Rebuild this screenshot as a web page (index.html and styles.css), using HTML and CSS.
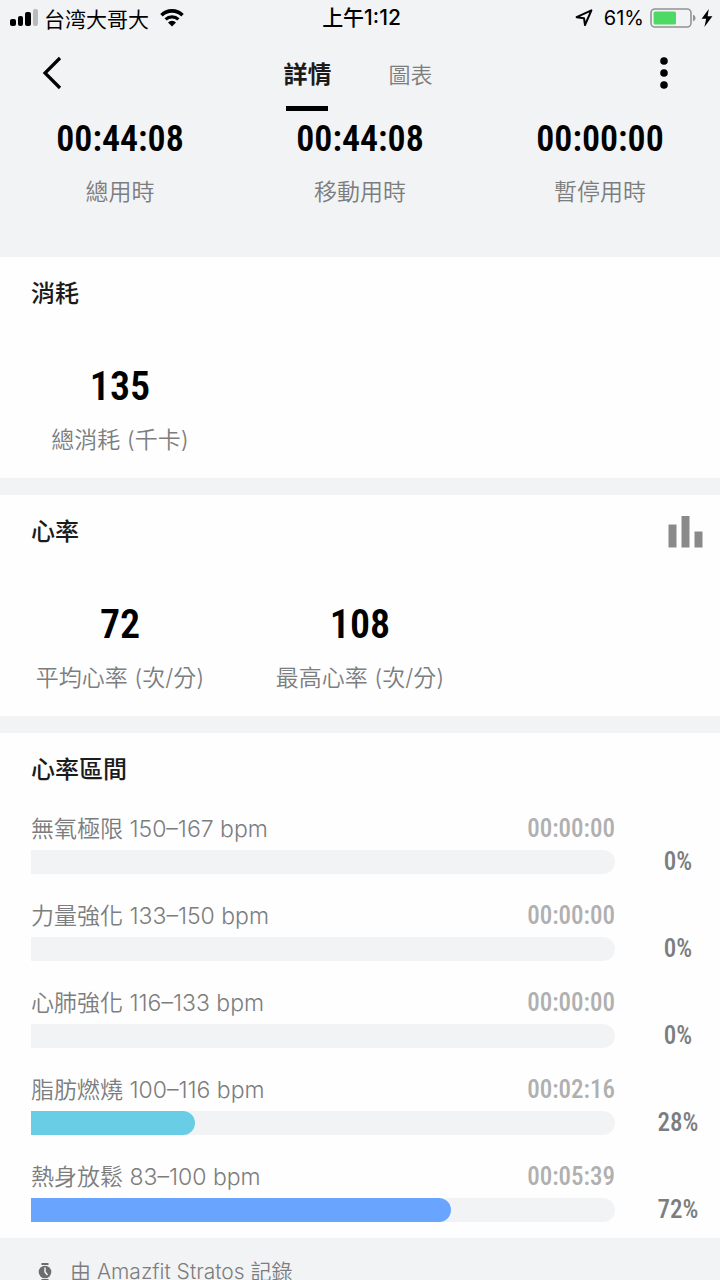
FILE: index.html
```html
<!DOCTYPE html>
<html lang="zh-Hant">
<head>
  <meta charset="UTF-8">
  <meta name="viewport" content="width=device-width, initial-scale=1.0">
  <title>運動詳情</title>
  <link rel="stylesheet" href="styles.css">
</head>
<body>
  <div class="app">
    <div class="status-bar">
      <div class="status-left">
        <svg class="signal" width="28" height="18" viewBox="0 0 28 18">
          <rect x="0" y="10" width="6" height="7" rx="2"/>
          <rect x="8" y="7" width="5" height="10" rx="2"/>
          <rect x="15" y="3" width="6" height="14" rx="2"/>
          <rect x="23" y="0" width="5" height="17" rx="2" fill="#b9babc"/>
        </svg>
        <span class="carrier" lang="zh-Hans">台湾大哥大</span>
        <svg class="wifi" width="24" height="18" viewBox="0 0 24 18">
          <path d="M1.5 6.2a15 15 0 0 1 21 0" fill="none" stroke="#000" stroke-width="3.6"/>
          <path d="M5.6 10.4a9.2 9.2 0 0 1 12.8 0" fill="none" stroke="#000" stroke-width="3.2"/>
          <path d="M12 17.4l-4-4a5.6 5.6 0 0 1 8 0z"/>
        </svg>
      </div>
      <span class="clock">上午1:12</span>
      <div class="status-right">
        <svg class="location" width="18" height="18" viewBox="0 0 18 18">
          <path d="M1.6 8.2L16.4 1.4L10 16L9 9.2z" fill="none" stroke="#000" stroke-width="2" stroke-linejoin="round"/>
        </svg>
        <span class="battery-level">61%</span>
        <svg class="battery" width="46" height="20" viewBox="0 0 46 20">
          <rect x="1" y="1" width="40" height="18" rx="4" fill="none" stroke="#929395" stroke-width="1.6"/>
          <rect x="3.6" y="3.6" width="22.4" height="12.8" rx="1.5" fill="#4cd964"/>
          <path d="M43 6.5q2.6 1 2.6 3.5t-2.6 3.5z" fill="#929395"/>
        </svg>
        <svg class="bolt" width="12" height="18" viewBox="0 0 12 18">
          <path d="M7.8 0L.6 9.8h4.6L3.4 18l8-10.8H6.6z"/>
        </svg>
      </div>
    </div>

    <header class="navbar">
      <button class="icon-btn" aria-label="返回">
        <svg width="44" height="44" viewBox="0 0 44 44">
          <path d="M30 7L15 22L30 37" fill="none" stroke="#000" stroke-width="3.2"/>
        </svg>
      </button>
      <nav class="tabs">
        <a href="#detail" class="tab active">詳情</a>
        <a href="#chart" class="tab">圖表</a>
      </nav>
      <button class="icon-btn" aria-label="更多">
        <svg width="44" height="44" viewBox="0 0 44 44">
          <circle cx="22" cy="10" r="3.8"/>
          <circle cx="22" cy="22" r="3.8"/>
          <circle cx="22" cy="34" r="3.8"/>
        </svg>
      </button>
    </header>

    <main class="content" id="detail">
      <section class="summary stats-grid">
        <div class="stat">
          <p class="value">00:44:08</p>
          <p class="label">總用時</p>
        </div>
        <div class="stat">
          <p class="value">00:44:08</p>
          <p class="label">移動用時</p>
        </div>
        <div class="stat">
          <p class="value">00:00:00</p>
          <p class="label">暫停用時</p>
        </div>
      </section>

      <section class="card">
        <div class="card-header">
          <h2>消耗</h2>
        </div>
        <div class="stats-grid">
          <div class="stat">
            <p class="value large">135</p>
            <p class="label">總消耗 (千卡)</p>
          </div>
        </div>
      </section>

      <section class="card">
        <div class="card-header">
          <h2>心率</h2>
          <button class="chart-btn" aria-label="心率圖表">
            <svg width="36" height="32" viewBox="0 0 36 32">
              <path d="M.5 8.5h8v23h-8zM13.5 0h8v31.5h-8zM26.5 15.500h8v16h-8z" fill="#8a8a8a"/>
            </svg>
          </button>
        </div>
        <div class="stats-grid">
          <div class="stat">
            <p class="value large">72</p>
            <p class="label">平均心率 (次/分)</p>
          </div>
          <div class="stat">
            <p class="value large">108</p>
            <p class="label">最高心率 (次/分)</p>
          </div>
        </div>
      </section>

      <section class="card zones">
        <div class="card-header">
          <h2>心率區間</h2>
        </div>
        <div class="zone">
          <div class="zone-info"><span>無氧極限 150–167 bpm</span><span class="zone-time">00:00:00</span></div>
          <div class="bar"></div>
          <span class="percent">0%</span>
        </div>
        <div class="zone">
          <div class="zone-info"><span>力量強化 133–150 bpm</span><span class="zone-time">00:00:00</span></div>
          <div class="bar"></div>
          <span class="percent">0%</span>
        </div>
        <div class="zone">
          <div class="zone-info"><span>心肺強化 116–133 bpm</span><span class="zone-time">00:00:00</span></div>
          <div class="bar"></div>
          <span class="percent">0%</span>
        </div>
        <div class="zone">
          <div class="zone-info"><span>脂肪燃燒 100–116 bpm</span><span class="zone-time">00:02:16</span></div>
          <div class="bar"><div class="fill fat-burn" style="width: 28%"></div></div>
          <span class="percent">28%</span>
        </div>
        <div class="zone">
          <div class="zone-info"><span>熱身放鬆 83–100 bpm</span><span class="zone-time">00:05:39</span></div>
          <div class="bar"><div class="fill warm-up" style="width: 72%"></div></div>
          <span class="percent">72%</span>
        </div>
      </section>

      <footer class="source">
        <svg width="14" height="20" viewBox="0 0 14 20" fill="#6c6d6f">
          <path d="M3.5 1h7v2h-7zM3.5 17h7v2h-7z"/>
          <circle cx="7" cy="10" r="6.3"/>
          <path d="M7 5.5V10l2.5 3" fill="none" stroke="#f2f3f5" stroke-width="1.5"/>
        </svg>
        <span>由 Amazfit Stratos 記錄</span>
      </footer>
    </main>
  </div>
</body>
</html>
```
FILE: styles.css
```css
:root {
  --page-bg: #f2f3f5;
  --card-bg: #fefefe;
  --heading-color: #1b1b1c;
  --label-color: #7c7d7e;
  --time-color: #b0b0b0;
  --text-font: Inter, "Noto Sans CJK TC", sans-serif;
  --number-font: "Roboto Condensed", "Liberation Sans Narrow", sans-serif;
}

* {
  box-sizing: border-box;
}

body {
  margin: 0;
  background-color: var(--page-bg);
  color: #000;
  font-family: var(--text-font);
  font-size: 23px;
}

h2, p {
  margin: 0;
}

button {
  padding: 0;
  border: none;
  background: none;
  cursor: pointer;
}

svg {
  display: block;
  flex-shrink: 0;
}

.app {
  display: flex;
  flex-direction: column;
  height: 100vh;
}

/* Status bar */
.status-bar {
  display: grid;
  grid-template-columns: 1fr auto 1fr;
  align-items: center;
  flex-shrink: 0;
  height: 36px;
  padding: 0 7px 0 10px;
  font-size: 20px;
}

.status-left,
.status-right {
  display: flex;
  align-items: center;
}

.status-right {
  justify-content: flex-end;
}

.carrier {
  margin: 0 11px 0 6px;
  font-family: "Noto Sans CJK SC", sans-serif;
  font-size: 21px;
  line-height: 34px;
}

.clock {
  font-size: 21px;
  font-weight: 500;
  line-height: 34px;
}

.battery-level {
  margin: 0 6px 0 11px;
}

.bolt {
  margin-left: 5px;
}

/* Navigation */
.navbar {
  display: flex;
  justify-content: space-between;
  flex-shrink: 0;
  height: 76px;
  padding: 0 34px 0 30px;
}

.icon-btn {
  height: 74px;
}

.tabs {
  display: flex;
  gap: 57px;
}

.tab {
  display: flex;
  flex-direction: column;
  align-items: center;
  justify-content: space-between;
  height: 75px;
  color: var(--label-color);
  font-size: 22px;
  font-weight: 350;
  line-height: 78px;
  text-decoration: none;
}

.tab.active {
  color: var(--heading-color);
  font-size: 24px;
  font-weight: 700;
}

.tab.active::after {
  content: "";
  flex-shrink: 0;
  width: 42px;
  height: 5px;
  margin-top: -8px;
  background-color: #000;
}

/* Scrolling content */
.content {
  flex: 1;
  min-height: 0;
  overflow-y: auto;
  scrollbar-width: none;
}

.stats-grid {
  display: grid;
  grid-template-columns: repeat(3, 1fr);
}

.summary {
  padding: 3px 0 50px;
}

.stat {
  text-align: center;
}

.value {
  margin-bottom: 14px;
  font-family: var(--number-font);
  font-size: 36px;
  font-weight: 600;
  line-height: 48px;
}

.value.large {
  font-size: 40px;
}

.label {
  color: var(--label-color);
  font-weight: 350;
  line-height: 30px;
}

.card {
  margin-bottom: 17px;
  padding: 19px 0 23px;
  background-color: var(--card-bg);
}

.card-header {
  display: flex;
  align-items: center;
  justify-content: space-between;
  height: 36px;
  margin-bottom: 51px;
  padding: 0 16px 0 31px;
}

.card-header h2 {
  color: var(--heading-color);
  font-size: 24px;
  font-weight: 500;
  line-height: 36px;
}

/* Heart rate zones */
.zones {
  margin-bottom: 0;
  padding-bottom: 16px;
}

.zones .card-header {
  margin-bottom: 26px;
}

.zone {
  display: grid;
  grid-template-columns: 1fr 84px;
  grid-template-rows: 30px 24px;
  gap: 6px 21px;
  margin-bottom: 27px;
  padding-left: 31px;
}

.zone:last-child {
  margin-bottom: 0;
}

.zone-info {
  display: flex;
  justify-content: space-between;
  grid-column: 1;
  color: var(--label-color);
  font-weight: 350;
  line-height: 30px;
}

.zone-time {
  color: var(--time-color);
  font-family: var(--number-font);
  font-size: 25px;
  font-weight: 500;
}

.bar {
  grid-column: 1;
  overflow: hidden;
  border-radius: 0 12px 12px 0;
  background-color: var(--page-bg);
}

.fill {
  height: 100%;
  border-radius: 0 12px 12px 0;
}

.fat-burn {
  background-color: #69cde6;
}

.warm-up {
  background-color: #69a5ff;
}

.percent {
  color: var(--label-color);
  font-family: var(--number-font);
  font-size: 25px;
  font-weight: 500;
  line-height: 24px;
  text-align: center;
}

.source {
  display: flex;
  align-items: center;
  gap: 18px;
  padding: 18px 38px;
  color: var(--label-color);
  font-size: 21px;
  font-weight: 350;
  line-height: 32px;
}
```
